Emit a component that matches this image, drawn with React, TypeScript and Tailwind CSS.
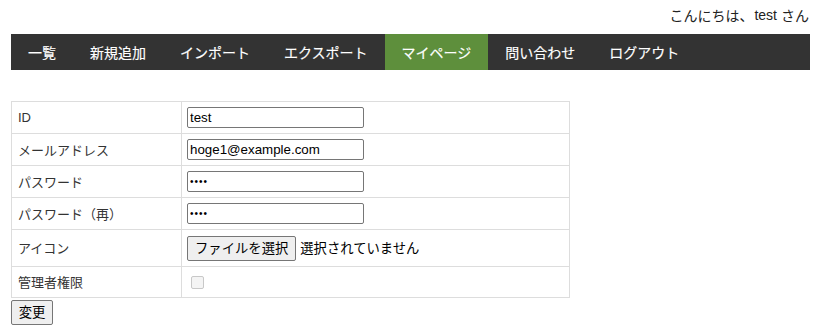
import React from "react";

const navItems = ["一覧", "新規追加", "インポート", "エクスポート", "マイページ", "問い合わせ", "ログアウト"];

const jp = { fontFamily: '"Noto Sans CJK JP", "Noto Sans", sans-serif' };
const ar = { fontFamily: '"Liberation Sans", Arial, "Noto Sans CJK JP", sans-serif' };

function TextInput({ value, type = "text" }: { value: string; type?: string }) {
  const pw = type === "password";
  return (
    <input
      type={type}
      defaultValue={value}
      readOnly
      style={ar}
      className={`w-[177px] h-[21px] border border-[#767676] rounded-[2px] px-[2px] ${pw ? "text-[10px] tracking-[1px]" : "text-[13.33px]"} text-black bg-white outline-none`}
    />
  );
}

export default function App() {
  const rowCls = "border-b border-[#ddd]";
  const labelCls = "w-[170px] border-r border-[#ddd] pl-[6px] text-[13px] text-[#333]";
  return (
    <div className="w-[819px] h-[330px] bg-white pl-[11px] pr-[9px]" style={jp}>
      <div className="h-[34px] flex justify-end items-start pt-[5px] text-[14px] text-[#222] pr-[1px]">
        <span>こんにちは、</span>
        <span style={ar} className="ml-[1px]">test</span>
        <span className="ml-[4px]">さん</span>
      </div>
      <nav className="h-[36px] bg-[#333] flex">
        {navItems.map((n) => (
          <div
            key={n}
            className={`px-[17px] flex items-center text-[14px] font-normal text-white [-webkit-text-stroke:0.15px_white] ${n === "マイページ" ? "bg-[#5e8f3c]" : ""}`}
          >
            {n}
          </div>
        ))}
      </nav>
      <div className="h-[31px]" />
      <div className="w-[559px] border border-[#ddd] border-b-0">
        <div className={`${rowCls} flex h-[32px]`}>
          <div className={`${labelCls} flex items-center`} style={ar}>ID</div>
          <div className="flex items-center pl-[5px]"><TextInput value="test" /></div>
        </div>
        <div className={`${rowCls} flex h-[32px]`}>
          <div className={`${labelCls} flex items-center`}>メールアドレス</div>
          <div className="flex items-center pl-[5px]"><TextInput value="hoge1@example.com" /></div>
        </div>
        <div className={`${rowCls} flex h-[32px]`}>
          <div className={`${labelCls} flex items-center`}>パスワード</div>
          <div className="flex items-center pl-[5px]"><TextInput value="test" type="password" /></div>
        </div>
        <div className={`${rowCls} flex h-[32px]`}>
          <div className={`${labelCls} flex items-center`}>パスワード（再）</div>
          <div className="flex items-center pl-[5px]"><TextInput value="test" type="password" /></div>
        </div>
        <div className={`${rowCls} flex h-[37px]`}>
          <div className={`${labelCls} flex items-center`}>アイコン</div>
          <div className="flex items-center pl-[5px] text-[13.33px] text-black">
            <button className="h-[25px] px-[7px] border border-[#767676] rounded-[2px] bg-[#efefef] text-[13.33px] text-black">ファイルを選択</button>
            <span className="ml-[4px]">選択されていません</span>
          </div>
        </div>
        <div className={`${rowCls} flex h-[31px]`}>
          <div className={`${labelCls} flex items-center`}>管理者権限</div>
          <div className="flex items-center pl-[9px]">
            <span className="w-[13px] h-[13px] border border-[#c8c8c8] rounded-[2px] bg-[#f4f4f4] inline-block" />
          </div>
        </div>
      </div>
      <button className="mt-[1px] h-[25px] w-[42px] border border-[#767676] rounded-[2px] bg-[#efefef] text-[13.33px] text-black">変更</button>
    </div>
  );
}
